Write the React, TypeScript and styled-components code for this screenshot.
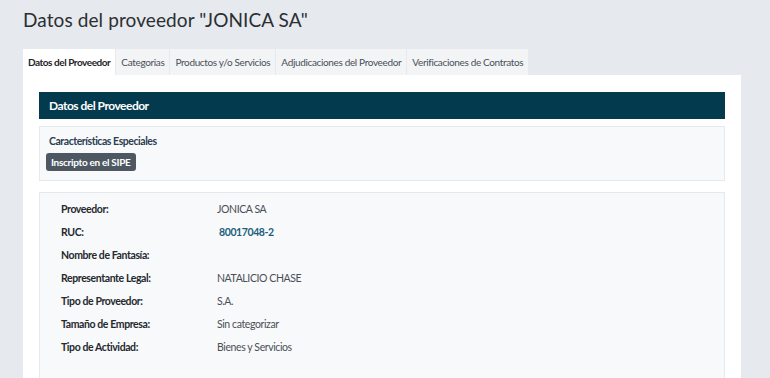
import React from "react";
import styled, { createGlobalStyle } from "styled-components";

const Global = createGlobalStyle`
  html, body { margin: 0; padding: 0; background: #e6e9ed; }
  body { font-family: "Lato", "Noto Sans", sans-serif; color: #333; }
`;

const Page = styled.div`
  padding: 8px 29px 0 23px;
  display: flex;
  flex-direction: column;
`;

const Title = styled.h1`
  margin: 0;
  font-size: 19px;
  font-weight: 400;
  line-height: 24px;
  color: #2b2f33;
  letter-spacing: 0.1px;
`;

const Tabs = styled.div`
  display: flex;
  gap: 1px;
  margin-top: 17px;
  height: 26px;
`;

const Tab = styled.div<{ $active?: boolean }>`
  padding: 0 5px;
  display: flex;
  align-items: center;
  font-size: 10px;
  letter-spacing: ${(p) => (p.$active ? "-0.45px" : "-0.35px")};
  color: ${(p) => (p.$active ? "#1f2327" : "#4a5057")};
  font-weight: ${(p) => (p.$active ? 700 : 400)};
  background: ${(p) => (p.$active ? "#ffffff" : "#f2f4f6")};
  white-space: nowrap;
`;

const Panel = styled.div`
  background: #fff;
  padding: 17px 16px 0 16px;
  display: flex;
  flex-direction: column;
`;

const Header = styled.div`
  background: #033a4e;
  color: #fff;
  height: 27px;
  display: flex;
  align-items: center;
  padding-left: 10px;
  font-size: 12px;
  letter-spacing: -0.5px;
  font-weight: 700;
`;

const Box = styled.div<{ $mt: number }>`
  margin-top: ${(p) => p.$mt}px;
  background: #f8f9fb;
  border: 1px solid #e7eaed;
`;

const SpecialBox = styled(Box)`
  height: 53px;
  padding: 0 9px;
  display: flex;
  flex-direction: column;
  align-items: flex-start;
`;

const SpecialTitle = styled.div`
  margin-top: 8px;
  font-size: 10.5px;
  letter-spacing: -0.45px;
  font-weight: 700;
  color: #2c3e50;
  line-height: 12px;
`;

const Badge = styled.span`
  margin-top: 6px;
  margin-left: -3px;
  background: #4e5862;
  color: #fff;
  font-size: 10px;
  letter-spacing: -0.3px;
  font-weight: 700;
  padding: 0 5px;
  height: 18px;
  display: inline-flex;
  align-items: center;
  border-radius: 3px;
`;

const InfoBox = styled(Box)`
  height: 183px;
  padding: 4px 0 0 21px;
  display: grid;
  grid-template-columns: 156px 1fr;
  grid-auto-rows: 23px;
  align-content: start;
`;

const Label = styled.div`
  font-size: 10.5px;
  letter-spacing: -0.4px;
  font-weight: 700;
  color: #25292d;
  display: flex;
  align-items: center;
`;

const Value = styled.div<{ $link?: boolean }>`
  font-size: 10.5px;
  letter-spacing: -0.4px;
  display: flex;
  align-items: center;
  color: ${(p) => (p.$link ? "#1d5f7b" : "#4a4f55")};
  font-weight: ${(p) => (p.$link ? 700 : 400)};
  padding-left: ${(p) => (p.$link ? "2px" : "0")};
`;

const rows: [string, string, boolean?][] = [
  ["Proveedor:", "JONICA SA"],
  ["RUC:", "80017048-2", true],
  ["Nombre de Fantasía:", ""],
  ["Representante Legal:", "NATALICIO CHASE"],
  ["Tipo de Proveedor:", "S.A."],
  ["Tamaño de Empresa:", "Sin categorizar"],
  ["Tipo de Actividad:", "Bienes y Servicios"],
];

const tabs = [
  "Datos del Proveedor",
  "Categorias",
  "Productos y/o Servicios",
  "Adjudicaciones del Proveedor",
  "Verificaciones de Contratos",
];

export default function App() {
  return (
    <>
      <Global />
      <Page>
        <Title>Datos del proveedor "JONICA SA"</Title>
        <Tabs>
          {tabs.map((t, i) => (
            <Tab key={t} $active={i === 0}>
              {t}
            </Tab>
          ))}
        </Tabs>
        <Panel>
          <Header>Datos del Proveedor</Header>
          <SpecialBox $mt={7}>
            <SpecialTitle>Características Especiales</SpecialTitle>
            <Badge>Inscripto en el SIPE</Badge>
          </SpecialBox>
          <InfoBox $mt={11}>
            {rows.map(([l, v, link]) => (
              <React.Fragment key={l}>
                <Label>{l}</Label>
                <Value $link={link}>{v}</Value>
              </React.Fragment>
            ))}
          </InfoBox>
        </Panel>
      </Page>
    </>
  );
}
